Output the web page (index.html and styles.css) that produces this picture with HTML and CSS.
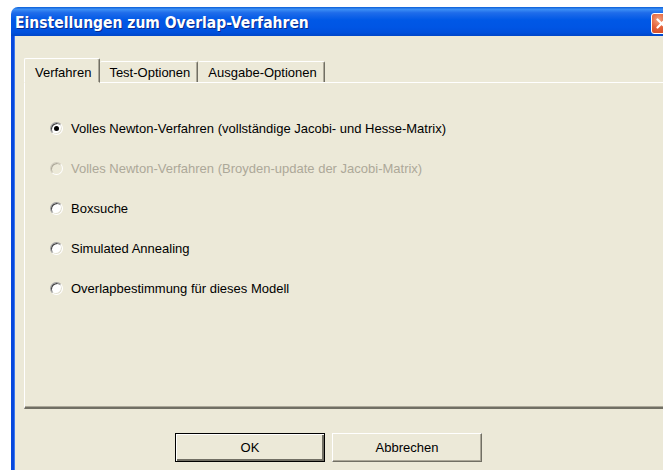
FILE: index.html
```html
<!DOCTYPE html>
<html lang="de">
<head>
<meta charset="utf-8">
<title>Einstellungen zum Overlap-Verfahren</title>
<link rel="stylesheet" href="styles.css">
</head>
<body>
<div class="window">
  <div class="titlebar">
    <span class="title">Einstellungen zum Overlap-Verfahren</span>
    <span class="close" aria-label="Schließen">
      <svg width="19" height="19" viewBox="0 0 19 19">
        <path d="M5.5 5.5 L13.5 13.5 M13.5 5.5 L5.5 13.5" stroke="#fff" stroke-width="2.2" stroke-linecap="round"/>
      </svg>
    </span>
  </div>
  <div class="client">
    <div class="tabs">
      <div class="tab active">Verfahren</div>
      <div class="tab">Test-Optionen</div>
      <div class="tab">Ausgabe-Optionen</div>
    </div>
    <div class="panel">
      <label class="option"><span class="radio checked"></span>Volles Newton-Verfahren (vollständige Jacobi- und Hesse-Matrix)</label>
      <label class="option disabled"><span class="radio"></span>Volles Newton-Verfahren (Broyden-update der Jacobi-Matrix)</label>
      <label class="option"><span class="radio"></span>Boxsuche</label>
      <label class="option"><span class="radio"></span>Simulated Annealing</label>
      <label class="option"><span class="radio"></span>Overlapbestimmung für dieses Modell</label>
    </div>
    <div class="buttons">
      <button class="btn default">OK</button>
      <button class="btn">Abbrechen</button>
    </div>
  </div>
</div>
</body>
</html>
```
FILE: styles.css
```css
html, body {
  margin: 0;
  padding: 0;
  background: #ffffff;
  width: 663px;
  height: 470px;
  overflow: hidden;
}

body {
  font-family: "Liberation Sans", Arial, sans-serif;
  font-size: 13px;
  color: #000;
}

.window {
  margin: 7px 0 0 11px;
  width: 680px;
  height: 470px;
  display: flex;
  flex-direction: column;
}

/* Luna blue caption */
.titlebar {
  height: 29px;
  box-sizing: border-box;
  border-radius: 7px 7px 0 0;
  background: linear-gradient(to bottom,
    #0a5fd8 0%, #3d8ff5 8%, #1f6cea 20%, #0058e6 45%, #0055e4 70%, #0050dc 88%, #0047c8 100%);
  display: flex;
  align-items: center;
  padding: 3px 0 0 4px;
  position: relative;
}

.title {
  font-family: "DejaVu Sans Condensed", "DejaVu Sans", sans-serif;
  font-stretch: condensed;
  font-weight: bold;
  font-size: 15.5px;
  color: #fff;
  text-shadow: 1px 1px 0 #0a2a8c;
}

.close {
  position: absolute;
  left: 640px;
  top: 6px;
  width: 21px;
  height: 21px;
  border: 1px solid #fff;
  border-radius: 3px;
  background: radial-gradient(circle at 35% 30%, #f3a27f 0%, #e4623a 45%, #c8401d 100%);
  box-sizing: border-box;
  display: flex;
  align-items: center;
  justify-content: center;
}
.close svg { display: block; }

.client {
  flex: 1;
  background: #ece9d8;
  border-left: 3px solid #0848dc;
  box-shadow: inset 1px 0 0 #3a78f0;
  padding: 22px 0 0 10px;
}

.tabs {
  display: flex;
  height: 24px;
  align-items: flex-end;
  position: relative;
  z-index: 1;
}

.tab {
  height: 19px;
  padding: 1px 7px 0 9px;
  display: flex;
  align-items: center;
  border-top: 1px solid #fff;
  border-left: 1px solid #fff;
  border-right: 1px solid #716f64;
  box-shadow: inset -1px 0 0 #aca899;
  border-radius: 2px 2px 0 0;
  box-sizing: content-box;
  background: #ece9d8;
  white-space: nowrap;
}

.tab + .tab {
  border-left-color: transparent;
}

.tab.active {
  height: 20px;
  padding: 3px 8px 0 10px;
  margin-bottom: -1px;
  border-bottom: 1px solid #ece9d8;
}

.tab.active + .tab {
  border-left: none;
}

.panel {
  width: 633px;
  height: 299px;
  border-style: solid;
  border-width: 1px 2px 2px 1px;
  border-color: #fff #716f64 #716f64 #fff;
  box-shadow: inset -1px -1px 0 #aca899;
  padding: 25px 0 0 25px;
  box-sizing: content-box;
  display: flex;
  flex-direction: column;
}

.option {
  height: 40px;
  display: flex;
  align-items: center;
  gap: 8px;
  flex: none;
}

.option.disabled {
  color: #aca899;
}

.radio {
  width: 13px;
  height: 13px;
  border-radius: 50%;
  box-sizing: border-box;
  border: 1px solid;
  border-color: #9d9d9d #ffffff #ffffff #9d9d9d;
  background: #fff;
  box-shadow: inset 1px 1px 0 #404040, inset -1px -1px 0 #e2e0d2;
  position: relative;
  flex: none;
}

.radio.checked::after {
  content: "";
  position: absolute;
  left: 3px;
  top: 3px;
  width: 5px;
  height: 5px;
  border-radius: 50%;
  background: #000;
}

.disabled .radio {
  background: #ece9d8;
  box-shadow: inset 1px 1px 0 #aca899;
  border-color: #cfcbbd #fff #fff #cfcbbd;
}

.buttons {
  display: flex;
  gap: 7px;
  margin: 24px 0 0 151px;
}

.btn {
  width: 150px;
  height: 29px;
  font-family: "Liberation Sans", Arial, sans-serif;
  font-size: 13px;
  color: #000;
  background: #ece9d8;
  border-style: solid;
  border-width: 1px;
  border-color: #fff #716f64 #716f64 #fff;
  box-shadow: inset -1px -1px 0 #aca899;
  padding: 0;
  margin: 0;
}

.btn.default {
  border: 1px solid #000;
  box-shadow: inset 1px 1px 0 #fff, inset -2px -2px 0 #716f64, inset -1px -1px 0 #aca899;
}
```
